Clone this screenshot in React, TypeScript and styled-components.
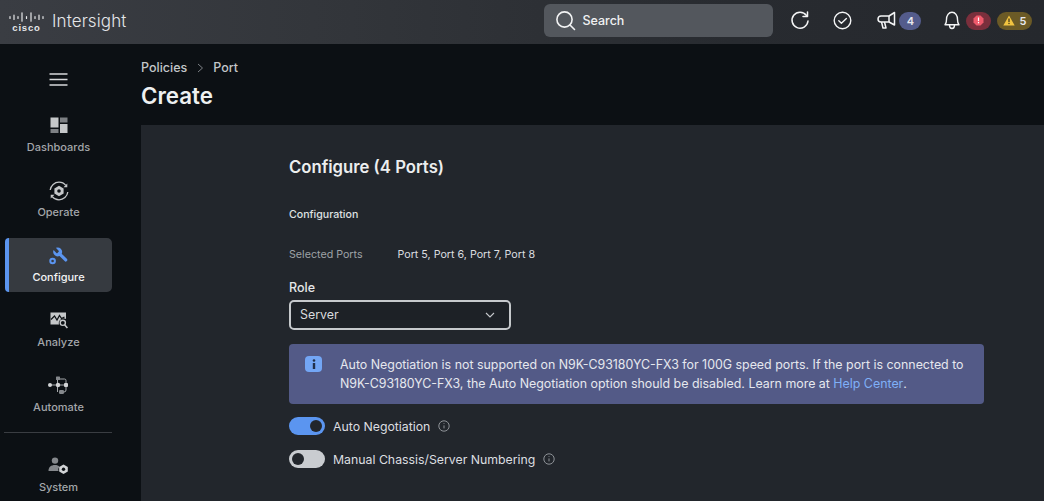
import React from "react";
import styled, { createGlobalStyle } from "styled-components";

const Global = createGlobalStyle`
  html, body { margin: 0; padding: 0; background: #0c1014; }
  body { font-family: Inter, "Noto Sans", "Liberation Sans", sans-serif; -webkit-font-smoothing: antialiased; }
  #root { width: 1044px; height: 501px; overflow: hidden; }
`;

const Page = styled.div`
  width: 1044px; height: 501px; display: flex; flex-direction: column; overflow: hidden; background: #0c1014;
`;
const TopBar = styled.header`
  height: 44px; flex: none; display: flex; align-items: center; background: linear-gradient(90deg, #3a3d43 0%, #33363b 30%, #282b30 70%, #25282d 100%);
  box-sizing: border-box; padding: 0 0 3px 9px;
`;
const LogoBox = styled.div`
  display: flex; flex-direction: column; align-items: center; width: 35px; color: #e6e8ea; margin-top: 3px;
`;
const LogoWord = styled.span`
  font-family: "Liberation Sans", sans-serif; font-size: 9.5px; font-weight: 700; line-height: 9px; letter-spacing: 0.8px; margin-top: 1px;
`;
const Brand = styled.span`
  margin-left: 8px; font-size: 17px; font-weight: 300; color: #e4e6e8; letter-spacing: 0.1px;
`;
const SearchBox = styled.div`
  margin-left: 418px; width: 229px; height: 33px; border-radius: 6px; background: #53575d; display: flex; align-items: center; padding-left: 11px; box-sizing: border-box; gap: 6px; color: #f0f1f2; font-size: 12.5px; font-weight: 500;
`;
const Tools = styled.div`
  display: flex; align-items: center; margin-left: 17px; color: #f4f5f6;
`;
const ToolIcon = styled.span<{ $ml?: number }>`
  display: inline-flex; margin-left: ${(p) => p.$ml ?? 0}px;
`;
const Pill = styled.span<{ $bg: string; $w: number; $ml: number; $fg?: string }>`
  display: inline-flex; align-items: center; justify-content: center; gap: 4px; height: 18px; width: ${(p) => p.$w}px; margin-left: ${(p) => p.$ml}px;
  border-radius: 9px; background: ${(p) => p.$bg}; color: ${(p) => p.$fg ?? "#e8e9ee"}; font-size: 11px; font-weight: 600;
`;
const Body = styled.div`
  flex: 1; display: flex; min-height: 0;
`;
const Sidebar = styled.nav`
  width: 141px; flex: none; background: #0c1014; display: flex; flex-direction: column; box-sizing: border-box; padding: 25px 29px 0 5px;
`;
const MenuButton = styled.div`
  height: 39px; display: flex; justify-content: center; align-items: flex-start; color: #d6d8da; padding-top: 3px; box-sizing: border-box;
`;
const NavList = styled.div`
  display: flex; flex-direction: column; gap: 11px;
`;
const NavItem = styled.div<{ $active?: boolean }>`
  position: relative; height: 54px; width: 107px; box-sizing: border-box; display: flex; flex-direction: column; align-items: center; padding-top: 8px; border-radius: 5px;
  background: ${(p) => (p.$active ? "#363a40" : "transparent")};
  color: ${(p) => (p.$active ? "#f2f3f4" : "#a3a6aa")};
  font-size: 11px; font-weight: 500; line-height: 14px;
  ${(p) => p.$active && `border-left: 4px solid #5b95f0; padding-right: 4px; border-radius: 4px 5px 5px 4px;`}
`;
const NavIconBox = styled.span`
  height: 20px; display: flex; align-items: center; justify-content: center; margin-bottom: 4px;
`;
const Divider = styled.div`
  height: 1px; width: 108px; margin: 10px 0 15px -1px; background: #3a3d42;
`;
const Main = styled.main`
  flex: 1; display: flex; flex-direction: column; min-width: 0;
`;
const PageHead = styled.div`
  height: 81px; flex: none; box-sizing: border-box; padding-top: 16px; background: #0c1014;
`;
const Crumbs = styled.div`
  display: flex; align-items: center; font-size: 12.5px; font-weight: 500; color: #c3c6c9; line-height: 16px;
`;
const CrumbSep = styled.span`
  display: inline-flex; margin: 0 9px 0 10px; color: #7c8085;
`;
const PageTitle = styled.h1`
  margin: 6px 0 0; font-size: 22.3px; line-height: 27px; font-weight: 600; color: #eef0f1;
`;
const Panel = styled.section`
  flex: 1; background: #22262c; box-sizing: border-box; padding: 31px 60px 0 148px; display: flex; flex-direction: column;
`;
const PanelTitle = styled.h2`
  margin: 0; font-size: 16.7px; line-height: 22px; font-weight: 600; color: #eceeef;
`;
const SectionName = styled.div`
  margin-top: 30px; font-size: 10.6px; line-height: 14px; font-weight: 500; color: #dfe1e3;
`;
const KV = styled.div`
  margin-top: 26px; display: flex; font-size: 10.7px; line-height: 14px;
`;
const KLabel = styled.span`
  width: 108.5px; color: #9ea2a6;
`;
const KValue = styled.span`
  color: #dcdee0;
`;
const FieldLabel = styled.label`
  margin-top: 18px; font-size: 12.5px; line-height: 16px; font-weight: 500; color: #e4e6e8;
`;
const SelectBox = styled.div`
  margin-top: 4px; width: 222px; height: 30px; box-sizing: border-box; border: 2px solid #c6c9cc; border-radius: 5px; background: #1d2126; display: flex; align-items: center; justify-content: space-between;
  padding: 0 14px 1px 9px; color: #d9dbdd; font-size: 12.4px;
`;
const Banner = styled.div`
  margin-top: 14px; height: 60px; box-sizing: border-box; border-radius: 4px; background: #535a87; display: flex; padding: 11px 10px 0 16px; color: #e6e8ee; font-size: 12.4px; line-height: 19px;
`;
const BannerIcon = styled.span`
  flex: none; width: 17px; height: 16px; margin-right: 18px; margin-top: 1px; border-radius: 4px; background: #73a6f5; display: flex; align-items: center; justify-content: center;
`;
const BannerText = styled.div`
  display: flex; flex-direction: column; white-space: pre;
`;
const BannerLine = styled.div`
  display: flex;
`;
const HelpLink = styled.a`
  color: #7fb0f7;
`;
const ToggleRow = styled.div<{ $mt: number }>`
  margin-top: ${(p) => p.$mt}px; display: flex; align-items: center; height: 18px; font-size: 12.3px; color: #dcdee0;
`;
const Toggle = styled.span<{ $on?: boolean }>`
  flex: none; width: 36px; height: 18px; border-radius: 9px; background: ${(p) => (p.$on ? "#5b95f0" : "#c9ccd0")}; display: flex; align-items: center; padding: 0 3px; box-sizing: border-box; justify-content: ${(p) => (p.$on ? "flex-end" : "flex-start")}; margin-right: 8px;
`;
const Knob = styled.span`
  width: 12px; height: 12px; border-radius: 50%; background: #22262c;
`;
const InfoMark = styled.span`
  display: inline-flex; margin-left: 8px; color: #8e9297;
`;

const CiscoLogo = () => (
  <LogoBox>
    <svg width="35" height="10" viewBox="0 0 35 10" fill="none" stroke="#e6e8ea" strokeWidth="1.2" strokeLinecap="round">
      <path d="M1 4.500v2M5 3v4.500M9 4.500v2M13 .8v8.400M17.500 4.500v2M22 .8v8.400M26 4.500v2M30 3v4.500M34 4.500v2" />
    </svg>
    <LogoWord>cisco</LogoWord>
  </LogoBox>
);

const InfoCircle = () => (
  <svg width="12" height="12" viewBox="0 0 12 12" fill="none" stroke="currentColor" strokeWidth="1">
    <circle cx="6" cy="6" r="5.2" />
    <path d="M6 5.400v3" />
    <circle cx="6" cy="3.600" r=".5" fill="currentColor" stroke="none" />
  </svg>
);

const DashIcon = () => (
  <svg width="18" height="17" viewBox="0 0 18 17">
    <rect x="0.500" y="0.500" width="8" height="10" fill="#c5c7c9" />
    <rect x="10" y="0.500" width="7.500" height="5" fill="#7d8084" />
    <rect x="0.500" y="12" width="8" height="4" fill="#7d8084" />
    <rect x="10" y="7" width="7.500" height="9" fill="#c5c7c9" />
  </svg>
);
const OperateIcon = () => (
  <svg width="20" height="20" viewBox="0 0 20 20" fill="none">
    <path d="M10 4.800l4.600 2.600v5.200L10 15.200l-4.600-2.600V7.400z" fill="#c5c7c9" />
    <circle cx="10" cy="10" r="1.800" fill="#0c1014" />
    <path d="M1.200 9C1.800 4.500 5.500 1.200 10 1.200c2.800 0 5.200 1.200 6.800 3.200M18.800 11c-.6 4.500-4.300 7.800-8.800 7.800-2.800 0-5.200-1.200-6.800-3.200" stroke="#c5c7c9" strokeWidth="1.300" />
    <path d="M18.300 2.500v3.800h-3.800zM1.700 17.500v-3.800h3.800z" fill="#c5c7c9" />
  </svg>
);
const WrenchIcon = () => (
  <svg width="19" height="18" viewBox="0 0 19 18" fill="none">
    <g transform="translate(20.500 -1) scale(-0.74 0.74)" fill="#5b95f0">
      <path d="M14.700 6.300a1 1 0 0 0 0 1.400l1.600 1.600a1 1 0 0 0 1.400 0l3.770-3.770a6 6 0 0 1-7.940 7.940l-6.910 6.910a2.120 2.120 0 0 1-3-3l6.910-6.910a6 6 0 0 1 7.940-7.940l-3.760 3.760z" />
    </g>
    <circle cx="3.600" cy="14" r="2.300" stroke="#5b95f0" strokeWidth="2" />
  </svg>
);
const AnalyzeIcon = () => (
  <svg width="18" height="17" viewBox="0 0 18 17" fill="none">
    <path d="M0.500 0.500h15.500v6.500a4.800 4.800 0 0 0-7 5.500H0.500z" fill="#c5c7c9" />
    <path d="M1 7.500L4.500 4l2.500 4 2.500-4.500 2 3 3-1.500" stroke="#0c1014" strokeWidth="1.200" />
    <circle cx="12.800" cy="10.800" r="2.600" stroke="#c5c7c9" strokeWidth="1.400" />
    <path d="M14.600 12.800l2.800 3.200" stroke="#c5c7c9" strokeWidth="1.600" />
  </svg>
);
const AutomateIcon = () => (
  <svg width="21" height="19" viewBox="0 0 21 19" fill="none">
    <path d="M1 9h19M9.500 3v13M11 3h5.500a1.500 1.500 0 0 1 1.500 1.500V9M18 9v5a2 2 0 0 1-2 2h-4" stroke="#a5a8ab" strokeWidth="1" />
    <rect x="8" y="0.500" width="4" height="3.500" rx="0.600" fill="#85888c" />
    <circle cx="2" cy="9" r="2" fill="#d2d4d6" />
    <circle cx="10" cy="9" r="2.200" fill="#d2d4d6" />
    <rect x="16" y="7" width="4" height="4" rx="1" fill="#d2d4d6" />
    <rect x="11" y="14" width="5" height="4" rx="1.200" fill="#85888c" />
  </svg>
);
const SystemIcon = () => (
  <svg width="21" height="17" viewBox="0 0 21 17" fill="none">
    <circle cx="7" cy="3.600" r="3.200" fill="#85888c" />
    <path d="M0.500 14c0-4 2.500-6 6.500-6 2 0 3.500.6 4.500 1.500A5 5 0 0 0 10.500 14z" fill="#85888c" />
    <path d="M15.500 7.500l4.300 2.400v4.700L15.500 17l-4.300-2.400V9.900z" fill="#d2d4d6" />
    <circle cx="15.500" cy="12.200" r="1.700" fill="#0c1014" />
  </svg>
);

const navItems = [
  { label: "Dashboards", icon: <DashIcon /> },
  { label: "Operate", icon: <OperateIcon /> },
  { label: "Configure", icon: <WrenchIcon />, active: true },
  { label: "Analyze", icon: <AnalyzeIcon /> },
  { label: "Automate", icon: <AutomateIcon /> },
];

export default function App() {
  return (
    <Page>
      <Global />
      <TopBar>
        <CiscoLogo />
        <Brand>Intersight</Brand>
        <SearchBox>
          <svg width="21" height="21" viewBox="0 0 21 21" fill="none" stroke="#f2f3f4" strokeWidth="1.600" strokeLinecap="round">
            <circle cx="9.500" cy="9.500" r="7.600" />
            <path d="M15 15l4.500 4.500" />
          </svg>
          <span>Search</span>
        </SearchBox>
        <Tools>
          <ToolIcon>
            <svg width="20" height="20" viewBox="0 0 20 20" fill="none" stroke="currentColor" strokeWidth="1.500" strokeLinecap="round" strokeLinejoin="round">
              <path d="M16.500 4.500A8 8 0 1 0 18 10" />
              <path d="M17.500 1v4.500H13" />
            </svg>
          </ToolIcon>
          <ToolIcon $ml={23}>
            <svg width="19" height="19" viewBox="0 0 19 19" fill="none" stroke="currentColor" strokeWidth="1.400" strokeLinecap="round" strokeLinejoin="round">
              <circle cx="9.500" cy="9.500" r="8.300" />
              <path d="M5.800 9.800l2.600 2.400 5-4.600" />
            </svg>
          </ToolIcon>
          <ToolIcon $ml={24}>
            <svg width="20" height="19" viewBox="0 0 20 18" fill="none" stroke="currentColor" strokeWidth="1.500" strokeLinejoin="round">
              <path d="M13 4.500L18.500 1v12.500L13 10.500H5A3 3 0 0 1 5 4.500z" />
              <path d="M13 4.500v6M5.500 10.500l1.500 6h3l-1.500-6" />
            </svg>
          </ToolIcon>
          <Pill $bg="#545c8c" $w={22} $ml={3}>4</Pill>
          <ToolIcon $ml={22}>
            <svg width="18" height="19" viewBox="0 0 18 19" fill="none" stroke="currentColor" strokeWidth="1.400" strokeLinejoin="round">
              <path d="M2 13.800c1.200-1.200 1.500-2.200 1.500-5.300C3.500 4.500 5.700 1.200 9 1.200s5.500 3.300 5.500 7.300c0 3.100.3 4.100 1.500 5.300z" />
              <path d="M6.500 14c0 2 1 3.500 2.500 3.500s2.500-1.500 2.500-3.500" />
            </svg>
          </ToolIcon>
          <Pill $bg="#7a2f3c" $w={25} $ml={5}>
            <svg width="11" height="11" viewBox="0 0 11 11">
              <path d="M3.500 0.500h4l3 3v4l-3 3h-4l-3-3v-4z" fill="#ee5a6b" />
              <rect x="4.900" y="2.500" width="1.200" height="3.600" fill="#fff" />
              <rect x="4.900" y="7" width="1.200" height="1.300" fill="#fff" />
            </svg>
          </Pill>
          <Pill $bg="#6b5a26" $w={35} $ml={6}>
            <svg width="12" height="11" viewBox="0 0 12 11">
              <path d="M6 0.500l5.700 10H.3z" fill="#f2c440" />
              <rect x="5.400" y="3.500" width="1.200" height="3.600" fill="#3a3015" />
              <rect x="5.400" y="7.900" width="1.200" height="1.200" fill="#3a3015" />
            </svg>
            5
          </Pill>
        </Tools>
      </TopBar>
      <Body>
        <Sidebar>
          <MenuButton>
            <svg width="19" height="15" viewBox="0 0 19 15" stroke="currentColor" strokeWidth="1.700">
              <path d="M0.500 2h18M0.500 7.500h18M0.500 13h18" />
            </svg>
          </MenuButton>
          <NavList>
            {navItems.map((n) => (
              <NavItem key={n.label} $active={n.active}>
                <NavIconBox>{n.icon}</NavIconBox>
                {n.label}
              </NavItem>
            ))}
          </NavList>
          <Divider />
          <NavItem>
            <NavIconBox>
              <SystemIcon />
            </NavIconBox>
            System
          </NavItem>
        </Sidebar>
        <Main>
          <PageHead>
            <Crumbs>
              Policies
              <CrumbSep>
                <svg width="7" height="10" viewBox="0 0 7 10" fill="none" stroke="currentColor" strokeWidth="1">
                  <path d="M1 1l4.500 4L1 9" />
                </svg>
              </CrumbSep>
              Port
            </Crumbs>
            <PageTitle>Create</PageTitle>
          </PageHead>
          <Panel>
            <PanelTitle>Configure (4 Ports)</PanelTitle>
            <SectionName>Configuration</SectionName>
            <KV>
              <KLabel>Selected Ports</KLabel>
              <KValue>Port 5, Port 6, Port 7, Port 8</KValue>
            </KV>
            <FieldLabel>Role</FieldLabel>
            <SelectBox>
              Server
              <svg width="10" height="6" viewBox="0 0 10 6" fill="none" stroke="#c6c9cc" strokeWidth="1.100">
                <path d="M1 1l4 4 4-4" />
              </svg>
            </SelectBox>
            <Banner>
              <BannerIcon>
                <svg width="4" height="10" viewBox="0 0 4 10" fill="#22304a">
                  <circle cx="2" cy="1.500" r="1.300" />
                  <rect x="0.800" y="4" width="2.400" height="6" />
                </svg>
              </BannerIcon>
              <BannerText>
                <BannerLine>
                  <span>Auto Negotiation is not supported on N9K-C93180YC-FX3 for 100G speed ports. If the port is connected to</span>
                </BannerLine>
                <BannerLine>
                  <span>N9K-C93180YC-FX3, the Auto Negotiation option should be disabled. Learn more at </span>
                  <HelpLink>Help Center</HelpLink>
                  <span>.</span>
                </BannerLine>
              </BannerText>
            </Banner>
            <ToggleRow $mt={13}>
              <Toggle $on>
                <Knob />
              </Toggle>
              Auto Negotiation
              <InfoMark>
                <InfoCircle />
              </InfoMark>
            </ToggleRow>
            <ToggleRow $mt={15}>
              <Toggle>
                <Knob />
              </Toggle>
              Manual Chassis/Server Numbering
              <InfoMark>
                <InfoCircle />
              </InfoMark>
            </ToggleRow>
          </Panel>
        </Main>
      </Body>
    </Page>
  );
}
